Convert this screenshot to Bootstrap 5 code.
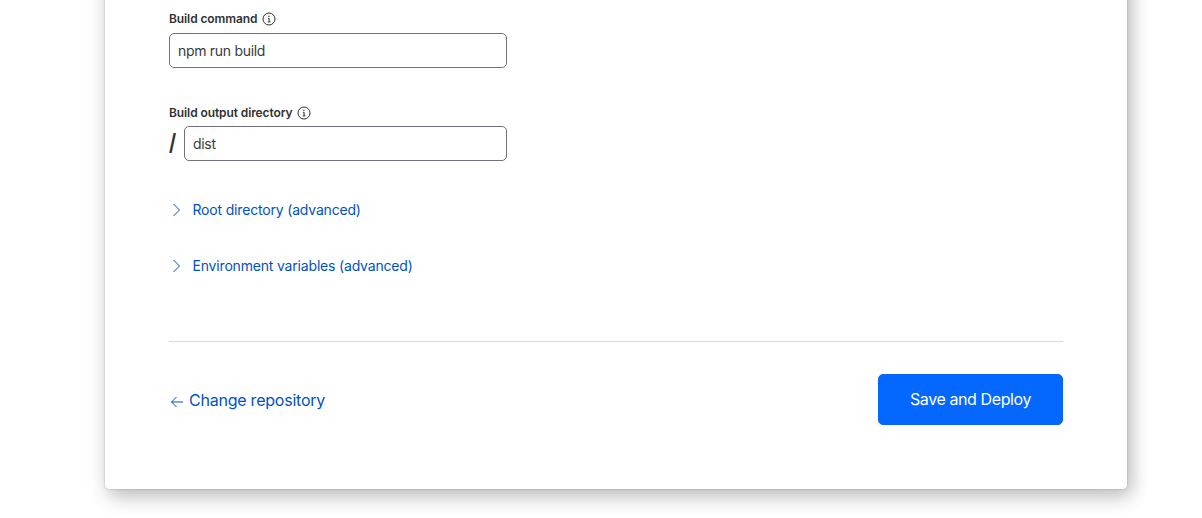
<!doctype html>
<html lang="en">
<head>
<meta charset="utf-8">
<title>Build settings</title>
<link href="https://cdn.jsdelivr.net/npm/bootstrap@5.3.0/dist/css/bootstrap.min.css" rel="stylesheet">
<style>
html,body{height:518px;overflow:hidden;background:#fff;}
body{font-family:Inter,"Liberation Sans",sans-serif;color:#313131;}
.panel{width:1022px;height:529px;margin:-40px 0 0 105px;padding:50px 64px 0;border-radius:4px;background:#fff;box-shadow:0 0 2px rgba(0,0,0,.28),5px 6px 18px rgba(0,0,0,.22),0 10px 24px rgba(0,0,0,.08);}
.fld-label{font-size:12px;font-weight:600;line-height:18px;height:18px;margin-bottom:5px;color:#313131;letter-spacing:-.1px;}
.fld-label-tight{margin-bottom:4px;}
.fld-label svg{margin-left:3.5px;}
.fld-wrap{width:338px;}
.fld-input{height:35px;padding:0 8px;font-size:14px;line-height:20px;color:#3a3a3a;border:1px solid #72727a;border-radius:5px;letter-spacing:-.3px;}
.slash-mark{width:15px;font-size:23px;font-weight:700;font-style:normal;line-height:32px;color:#313131;flex:none;position:relative;top:-1px;transform:scaleX(.8);transform-origin:left center;}
.gap-field{margin-top:36px;}
.adv-link{display:flex;align-items:center;height:20px;font-size:14px;line-height:20px;color:#0051c3;text-decoration:none;letter-spacing:-.18px;}
.adv-link svg{width:16px;height:16px;margin-right:7.5px;flex:none;}
.adv-one{margin-top:39px;}
.adv-two{margin-top:36px;}
.divider{height:1px;margin:65px 0 32px;background:#d9d9d9;opacity:1;border:0;}
.back-link{font-size:16px;line-height:24px;color:#0051c3;text-decoration:none;letter-spacing:-.23px;}
.back-link svg{width:16px;height:16px;margin-right:4px;vertical-align:-4px;}
.deploy-btn{width:185px;height:51px;padding:0 0 2px;font-size:16px;letter-spacing:-.4px;background:#0468ff;border-color:#0468ff;border-radius:5px;}
</style>
</head>
<body>
<div class="panel">
  <div class="fld-wrap">
    <div class="fld-label d-flex align-items-center">Build command
      <svg width="16" height="16" viewBox="0 0 16 16" fill="none" stroke="#313131" aria-hidden="true"><circle cx="8" cy="8" r="6"/><path d="M7 7.3h1.1v3.6M6.8 10.9h2.6"/><circle cx="7.9" cy="5.2" r=".7" fill="#313131" stroke="none"/></svg>
    </div>
    <input class="form-control fld-input" type="text" value="npm run build" aria-label="Build command">
  </div>
  <div class="fld-wrap gap-field">
    <div class="fld-label fld-label-tight d-flex align-items-center">Build output directory
      <svg width="16" height="16" viewBox="0 0 16 16" fill="none" stroke="#313131" aria-hidden="true"><circle cx="8" cy="8" r="6"/><path d="M7 7.3h1.1v3.6M6.8 10.9h2.6"/><circle cx="7.9" cy="5.2" r=".7" fill="#313131" stroke="none"/></svg>
    </div>
    <div class="d-flex align-items-center">
      <span class="slash-mark">/</span>
      <input class="form-control fld-input" type="text" value="dist" aria-label="Build output directory">
    </div>
  </div>
  <a class="adv-link adv-one" href="#">
    <svg viewBox="0 0 16 16" fill="none" stroke="#0051c3" aria-hidden="true"><path d="M4.5 2l6 6-6 6"/></svg>Root directory (advanced)
  </a>
  <a class="adv-link adv-two" href="#">
    <svg viewBox="0 0 16 16" fill="none" stroke="#0051c3" aria-hidden="true"><path d="M4.5 2l6 6-6 6"/></svg>Environment variables (advanced)
  </a>
  <hr class="divider">
  <div class="d-flex justify-content-between align-items-center">
    <a class="back-link" href="#"><svg viewBox="0 0 16 16" fill="none" stroke="#0051c3" aria-hidden="true"><path d="M14 8H2.5M7.5 3l-5 5 5 5"/></svg>Change repository</a>
    <button class="btn btn-primary deploy-btn" type="button">Save and Deploy</button>
  </div>
</div>
<script src="https://cdn.jsdelivr.net/npm/bootstrap@5.3.0/dist/js/bootstrap.bundle.min.js"></script>
</body>
</html>
